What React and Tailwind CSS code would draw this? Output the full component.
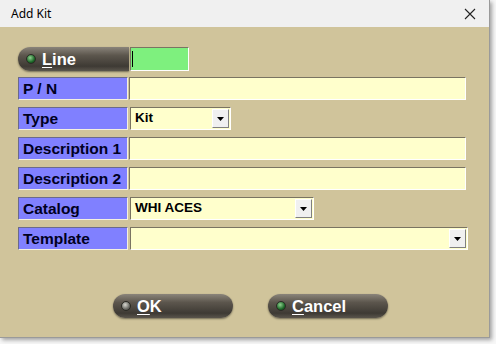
import React from "react";

const Label = ({ children }) => (
    <div className="w-[110px] h-[23px] bg-[#8080ff] border border-t-[#6a6a8a] border-l-[#6a6a8a] border-b-[#f4f0e0] border-r-[#f4f0e0] pl-[4px] flex items-center text-[15.5px] font-bold text-[#000022] leading-none">
        {children}
    </div>
);

const Sunken = ({ className, children }) => (
    <div className={`h-[23px] border border-t-[#7a7462] border-l-[#7a7462] border-b-white border-r-white flex items-center ${className}`}>
        {children}
    </div>
);

const DropArrow = () => (
    <div className="ml-auto mr-[1px] w-[17px] h-[19px] bg-[#f0f0f0] border border-t-white border-l-white border-b-[#808080] border-r-[#808080] flex items-center justify-center">
        <svg width="7" height="4" viewBox="0 0 7 4"><path d="M0 0h7L3.5 4z" fill="#000" /></svg>
    </div>
);

const Led = ({ on }) => (
    <span className={`w-[10px] h-[10px] rounded-full border border-[#2a2a24] shrink-0 ${on ? 'bg-[radial-gradient(circle_at_40%_35%,#8fd08f,#1f6a2a_60%,#0d3010)]' : 'bg-[radial-gradient(circle_at_40%_35%,#d8d8d0,#6a6a64_60%,#3a3a36)]'}`} />
);

const PillButton = ({ letter, rest, on, className }) => (
    <button className={`h-[24px] flex items-center gap-[6px] pl-[8px] bg-[linear-gradient(to_bottom,#8a847a,#5c564d_35%,#3e3a34_80%,#5a554c)] shadow-[0_1px_2px_rgba(0,0,0,0.45)] text-white text-[16.5px] font-bold leading-none ${className}`}>
        <Led on={on} />
        <span><span className="underline underline-offset-2">{letter}</span>{rest}</span>
    </button>
);

export default function App() {
    return (
        <div className="w-[496px] h-[344px] bg-[#f7f7f7] font-['Liberation_Sans',Arial,sans-serif]">
            <div className="w-[490px] h-[338px] flex flex-col shadow-[2px_2px_4px_rgba(0,0,0,0.35)] border-r border-b border-[#9a9a9a]">
                <div className="h-[27px] bg-[#f0f0f0] flex items-center justify-between pl-[11px] pr-[13px] shrink-0">
                    <span className="text-[12px] text-black font-['Noto_Sans',sans-serif]">Add Kit</span>
                    <svg width="12" height="12" viewBox="0 0 12 12"><path d="M1 1l10 10M11 1L1 11" stroke="#222" strokeWidth="1.1" /></svg>
                </div>
                <div className="flex-1 bg-[#d0c49b] pt-[20px] pl-[18px] flex flex-col">
                    <div className="flex items-center h-[24px]">
                        <PillButton letter="L" rest="ine" on className="w-[111px] rounded-l-full" />
                        <Sunken className="ml-px w-[59px] h-[24px] bg-[#7ef07e]">
                            <span className="ml-[1px] w-px h-[16px] bg-black" />
                        </Sunken>
                    </div>
                    <div className="flex flex-col gap-[7px] mt-[6px]">
                        <div className="flex gap-px">
                            <Label>P / N</Label>
                            <Sunken className="w-[337px] bg-[#ffffcc]" />
                        </div>
                        <div className="flex gap-[2px]">
                            <Label>Type</Label>
                            <Sunken className="w-[101px] bg-[#ffffcc] text-[13.5px] font-bold text-black pl-[4px]">
                                Kit<DropArrow />
                            </Sunken>
                        </div>
                        <div className="flex gap-px">
                            <Label>Description 1</Label>
                            <Sunken className="w-[337px] bg-[#ffffcc]" />
                        </div>
                        <div className="flex gap-px">
                            <Label>Description 2</Label>
                            <Sunken className="w-[337px] bg-[#ffffcc]" />
                        </div>
                        <div className="flex gap-[2px]">
                            <Label>Catalog</Label>
                            <Sunken className="w-[184px] bg-[#ffffcc] text-[13.5px] font-bold text-black pl-[4px]">
                                WHI ACES<DropArrow />
                            </Sunken>
                        </div>
                        <div className="flex gap-[2px]">
                            <Label>Template</Label>
                            <Sunken className="w-[338px] bg-[#ffffcc]">
                                <DropArrow />
                            </Sunken>
                        </div>
                    </div>
                    <div className="flex gap-[35px] mt-[44px] pl-[95px]">
                        <PillButton letter="O" rest="K" className="w-[120px] rounded-full" />
                        <PillButton letter="C" rest="ancel" on className="w-[120px] rounded-full" />
                    </div>
                </div>
            </div>
        </div>
    );
}
